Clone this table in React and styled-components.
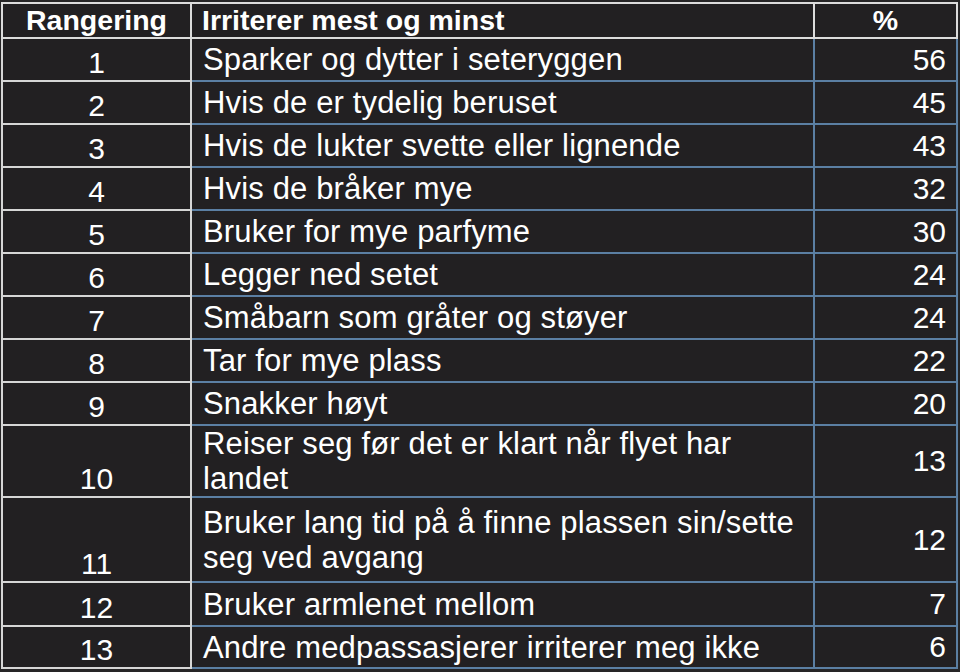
import React from 'react';
import styled, { createGlobalStyle } from 'styled-components';

const GlobalStyle = createGlobalStyle`
  html, body {
    margin: 0;
    padding: 0;
    background: #262526;
  }
`;

const ROWS = [
  { rank: 1, text: 'Sparker og dytter i seteryggen', pct: 56 },
  { rank: 2, text: 'Hvis de er tydelig beruset', pct: 45 },
  { rank: 3, text: 'Hvis de lukter svette eller lignende', pct: 43 },
  { rank: 4, text: 'Hvis de bråker mye', pct: 32 },
  { rank: 5, text: 'Bruker for mye parfyme', pct: 30 },
  { rank: 6, text: 'Legger ned setet', pct: 24 },
  { rank: 7, text: 'Småbarn som gråter og støyer', pct: 24 },
  { rank: 8, text: 'Tar for mye plass', pct: 22 },
  { rank: 9, text: 'Snakker høyt', pct: 20 },
  { rank: 10, text: 'Reiser seg før det er klart når flyet har landet', pct: 13, height: 72 },
  { rank: 11, text: 'Bruker lang tid på å finne plassen sin/sette seg ved avgang', pct: 12, height: 85 },
  { rank: 12, text: 'Bruker armlenet mellom', pct: 7, height: 44 },
  { rank: 13, text: 'Andre medpassasjerer irriterer meg ikke', pct: 6, height: 42 },
];

const Page = styled.div`
  padding: 2px 4px 0 1px;
  font-family: "Liberation Sans", Arial, Helvetica, sans-serif;
  color: #ffffff;
`;

const Table = styled.table`
  width: 955px;
  table-layout: fixed;
  border-collapse: collapse;
  background: #222022;
`;

const HeadCell = styled.th`
  height: 33px;
  padding: 0 10px;
  border: 2px solid #dcdcdc;
  font-size: 28.5px;
  font-weight: 700;
  text-align: ${(p) => p.$align || 'left'};
  vertical-align: middle;
  line-height: 1;
`;

const Row = styled.tr`
  height: ${(p) => p.$h}px;
`;

const RankCell = styled.td`
  border: 2px solid #d6d6d6;
  padding: 0 0 2px;
  text-align: center;
  vertical-align: bottom;
  font-size: 30px;
  line-height: 30px;
`;

const TextCell = styled.td`
  border: 2px solid #5b7fa3;
  padding: 0 10px 0 11px;
  vertical-align: middle;
  font-size: 31px;
  letter-spacing: 0.15px;
  line-height: 35px;
`;

const PctCell = styled.td`
  border: 2px solid #5b7fa3;
  padding: 0 10px;
  text-align: right;
  vertical-align: middle;
  font-size: 30px;
  line-height: 34px;
`;

export default function App() {
  return (
    <Page>
      <GlobalStyle />
      <Table>
        <colgroup>
          <col style={{ width: 189 }} />
          <col style={{ width: 623 }} />
          <col style={{ width: 143 }} />
        </colgroup>
        <thead>
          <tr>
            <HeadCell $align="center">Rangering</HeadCell>
            <HeadCell>Irriterer mest og minst</HeadCell>
            <HeadCell $align="center">%</HeadCell>
          </tr>
        </thead>
        <tbody>
          {ROWS.map((r) => (
            <Row key={r.rank} $h={r.height || 43}>
              <RankCell>{r.rank}</RankCell>
              <TextCell>{r.text}</TextCell>
              <PctCell>{r.pct}</PctCell>
            </Row>
          ))}
        </tbody>
      </Table>
    </Page>
  );
}
